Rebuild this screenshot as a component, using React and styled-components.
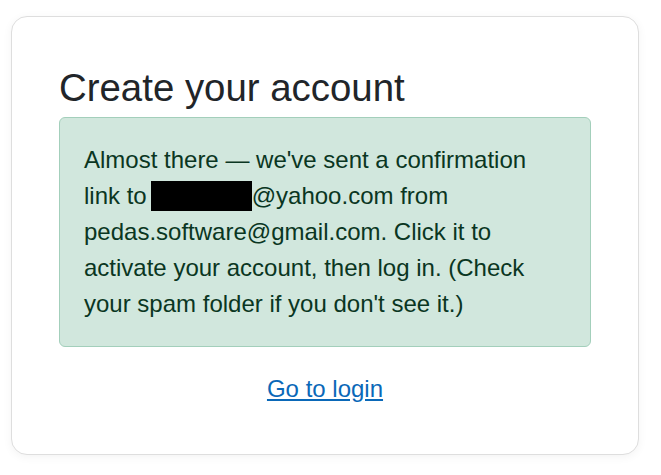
import React from 'react';
import styled, { createGlobalStyle } from 'styled-components';

const GlobalStyle = createGlobalStyle`
  html, body {
    margin: 0;
    padding: 0;
    background: #ffffff;
  }
  body {
    font-family: "Liberation Sans", Arial, sans-serif;
    color: #212529;
  }
`;

const Page = styled.div`
  padding: 16px 22px 20px 11px;
`;

const Card = styled.div`
  box-sizing: border-box;
  width: 628px;
  background: #ffffff;
  border: 1px solid #dedede;
  border-radius: 16px;
  box-shadow: 0 2px 10px rgba(0, 0, 0, 0.05);
  padding: 48px 47px 47px;
  display: flex;
  flex-direction: column;
`;

const Title = styled.h1`
  margin: 0 0 6px;
  font-size: 38.4px;
  font-weight: 400;
  line-height: 1.2;
  color: #212529;
`;

const Alert = styled.div`
  background: #d1e7dd;
  border: 1px solid #a3cfbb;
  border-radius: 6px;
  padding: 24px;
  color: #0a3622;
  font-size: 24px;
  line-height: 36px;
`;

const Redacted = styled.span`
  display: inline-block;
  width: 101px;
  height: 30px;
  margin-left: 4px;
  background: #000000;
  vertical-align: -7px;
`;

const Footer = styled.div`
  margin-top: 24px;
  text-align: center;
  font-size: 24px;
  line-height: 36px;
`;

const Link = styled.a`
  color: #0a68b8;
  text-decoration: underline;
`;

export default function App() {
  return (
    <Page>
      <GlobalStyle />
      <Card>
        <Title>Create your account</Title>
        <Alert>
          Almost there — we've sent a confirmation link to<Redacted />@yahoo.com from
          pedas.software@gmail.com. Click it to activate your account, then log in.
          (Check your spam folder if you don't see it.)
        </Alert>
        <Footer>
          <Link href="#login">Go to login</Link>
        </Footer>
      </Card>
    </Page>
  );
}
